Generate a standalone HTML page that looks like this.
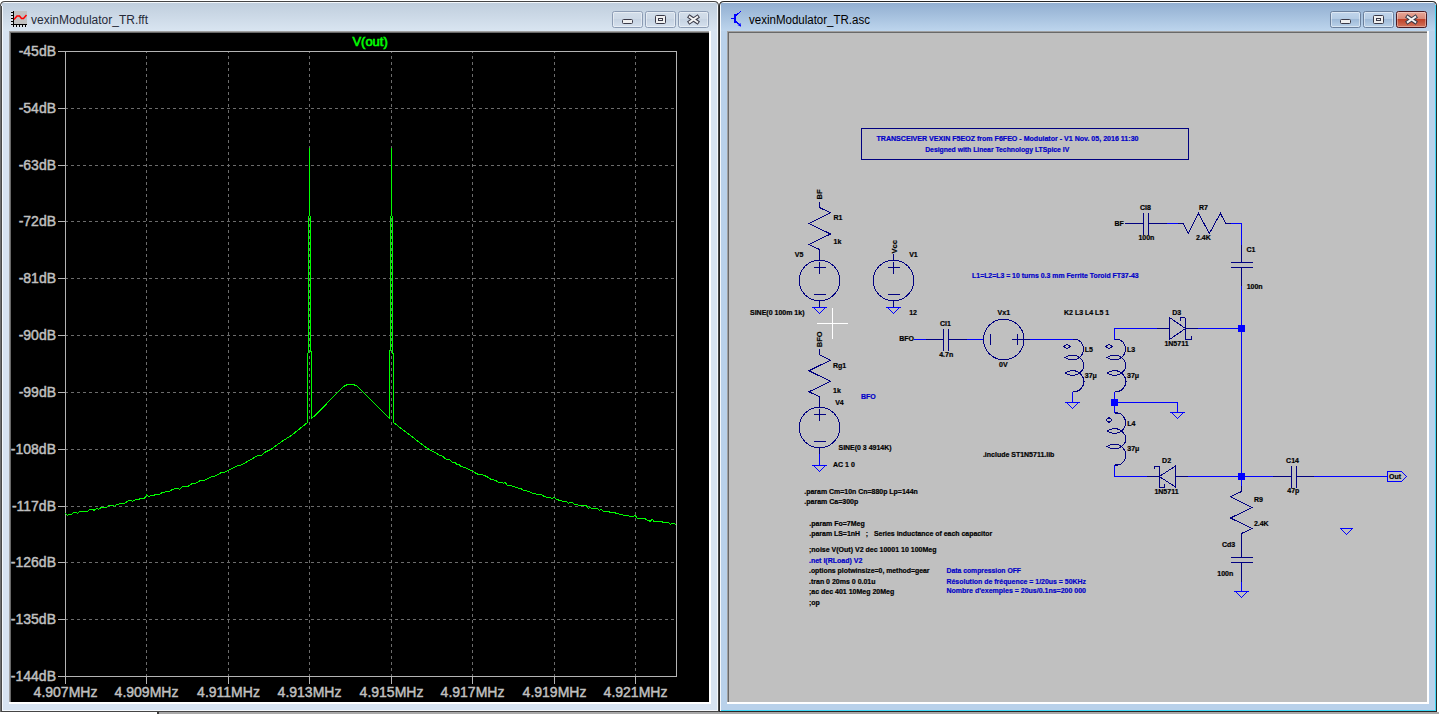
<!DOCTYPE html>
<html><head><meta charset="utf-8"><style>
html,body{margin:0;padding:0;width:1439px;height:714px;overflow:hidden;background:#fff}
</style></head><body>
<svg width="1439" height="714" viewBox="0 0 1439 714" style="position:absolute;left:0;top:0">
<rect width="1439" height="714" fill="#ffffff"/>
<rect x="157" y="712" width="1282" height="2" fill="#a9a9a9"/>
<rect x="157" y="712" width="2" height="2" fill="#3c3c3c"/>
<defs><linearGradient id="tg_i" x1="0" y1="0" x2="0" y2="1"><stop offset="0" stop-color="#c0cedd"/><stop offset="1" stop-color="#d9e5f1"/></linearGradient></defs>
<path d="M0 712 V6 Q0 1 5 1 H714 Q719 1 719 6 V712 Z" fill="#454545"/>
<path d="M1 711 V6 Q1 2 5 2 H714 Q718 2 718 6 V711 Z" fill="#f4f8fc"/>
<rect x="2" y="3" width="715" height="707" fill="#d7e3f1"/>
<rect x="2" y="3" width="715" height="28" fill="url(#tg_i)"/>
<g shape-rendering="crispEdges"><rect x="11" y="11" width="16" height="16" fill="#e4e4e4" opacity="0.6"/><rect x="14" y="11" width="13" height="13" fill="#c0c0c0"/><rect x="13" y="11" width="1" height="14" fill="#000"/><rect x="11" y="24" width="16" height="1" fill="#000"/><rect x="11" y="12" width="2" height="1" fill="#000"/><rect x="11" y="15" width="2" height="1" fill="#000"/><rect x="11" y="18" width="2" height="1" fill="#000"/><rect x="11" y="21" width="2" height="1" fill="#000"/><rect x="13" y="25" width="1" height="2" fill="#000"/><rect x="16" y="25" width="1" height="2" fill="#000"/><rect x="19" y="25" width="1" height="2" fill="#000"/><rect x="22" y="25" width="1" height="2" fill="#000"/><rect x="25" y="25" width="1" height="2" fill="#000"/></g><path d="M14 19.5 L17 16 L19.5 16 L21.5 18.5 L23.5 18.5 L26.5 15" fill="none" stroke="#f00" stroke-width="1.5"/>
<text x="31" y="24" font-family='"Liberation Sans", sans-serif' font-size="12" fill="#252a38" textLength="117" lengthAdjust="spacingAndGlyphs">vexinModulator_TR.fft</text>
<defs><linearGradient id="bg0" x1="0" y1="0" x2="0" y2="1"><stop offset="0" stop-color="#d3deea"/><stop offset="0.5" stop-color="#cdd9e6"/><stop offset="0.5" stop-color="#c6d3e2"/><stop offset="1" stop-color="#d6e1ee"/></linearGradient></defs>
<rect x="612.5" y="11.5" width="30" height="16" rx="2" fill="url(#bg0)" stroke="#8c9cb4"/>
<rect x="613.5" y="12.5" width="28" height="14" rx="1" fill="none" stroke="#ffffff" stroke-opacity="0.45"/>
<rect x="622.5" y="19.5" width="10" height="4" rx="1" fill="#f0f0f0" stroke="#3a3a48"/>
<rect x="645.5" y="11.5" width="30" height="16" rx="2" fill="url(#bg0)" stroke="#8c9cb4"/>
<rect x="646.5" y="12.5" width="28" height="14" rx="1" fill="none" stroke="#ffffff" stroke-opacity="0.45"/>
<rect x="655.5" y="15.5" width="10" height="8" rx="1" fill="#f0f0f0" stroke="#3a3a48"/>
<rect x="658.5" y="18.5" width="4" height="2" fill="none" stroke="#3a3a48"/>
<rect x="678.5" y="11.5" width="30" height="16" rx="2" fill="url(#bg0)" stroke="#8c9cb4"/>
<rect x="679.5" y="12.5" width="28" height="14" rx="1" fill="none" stroke="#ffffff" stroke-opacity="0.45"/>
<path d="M689.8 17 L697.2 22 M697.2 17 L689.8 22" stroke="#3a3a48" stroke-width="4" stroke-linecap="square"/>
<path d="M689.8 17 L697.2 22 M697.2 17 L689.8 22" stroke="#f4f4f4" stroke-width="2" stroke-linecap="square"/>
<rect x="0" y="6" width="1" height="706" fill="#6e6e6e"/><rect x="1" y="6" width="1" height="705" fill="#474747"/><rect x="2" y="6" width="1" height="704" fill="#f4f8fc"/>
<g shape-rendering="crispEdges">
<rect x="9" y="31" width="702" height="673" fill="#ffffff"/>
<rect x="9" y="31" width="700" height="1" fill="#a0a0a0"/><rect x="9" y="31" width="1" height="671" fill="#a0a0a0"/>
<rect x="10" y="32" width="699" height="1" fill="#696969"/><rect x="10" y="32" width="1" height="670" fill="#696969"/>
<rect x="11" y="33" width="698" height="669" fill="#000"/>
</g>
<defs><linearGradient id="tg_a" x1="0" y1="0" x2="0" y2="1"><stop offset="0" stop-color="#92afd1"/><stop offset="1" stop-color="#bdd5ed"/></linearGradient></defs>
<path d="M719 712 V6 Q719 1 724 1 H1432 Q1437 1 1437 6 V712 Z" fill="#262626"/>
<path d="M720 711 V6 Q720 2 724 2 H1432 Q1436 2 1436 6 V711 Z" fill="#f4f8fc"/>
<rect x="721" y="3" width="714" height="707" fill="#b9d1ea"/>
<rect x="1435" y="5" width="1" height="706" fill="#41d6f4"/>
<rect x="721" y="710" width="715" height="1" fill="#41d6f4"/>
<rect x="721" y="3" width="714" height="28" fill="url(#tg_a)"/>
<g fill="#0000ff" shape-rendering="crispEdges"><rect x="731" y="18" width="3" height="1"/><rect x="734" y="14" width="2" height="9"/></g><path d="M735.5 16 L741 11 M735.5 21 L741.5 26.5" stroke="#00f" stroke-width="1" fill="none" shape-rendering="crispEdges"/><path d="M737.5 25 L740.5 23 L741 26.8 Z" fill="#00f"/>
<text x="749" y="24" font-family='"Liberation Sans", sans-serif' font-size="12" fill="#000" textLength="121" lengthAdjust="spacingAndGlyphs">vexinModulator_TR.asc</text>
<defs><linearGradient id="bg1" x1="0" y1="0" x2="0" y2="1"><stop offset="0" stop-color="#c2d6ec"/><stop offset="0.5" stop-color="#b4cbe4"/><stop offset="0.5" stop-color="#9fbad8"/><stop offset="1" stop-color="#bcd3ea"/></linearGradient></defs>
<rect x="1330.5" y="11.5" width="30" height="16" rx="2" fill="url(#bg1)" stroke="#6a7f9c"/>
<rect x="1331.5" y="12.5" width="28" height="14" rx="1" fill="none" stroke="#ffffff" stroke-opacity="0.45"/>
<rect x="1340.5" y="19.5" width="10" height="4" rx="1" fill="#f0f0f0" stroke="#3a3a48"/>
<rect x="1363.5" y="11.5" width="30" height="16" rx="2" fill="url(#bg1)" stroke="#6a7f9c"/>
<rect x="1364.5" y="12.5" width="28" height="14" rx="1" fill="none" stroke="#ffffff" stroke-opacity="0.45"/>
<rect x="1373.5" y="15.5" width="10" height="8" rx="1" fill="#f0f0f0" stroke="#3a3a48"/>
<rect x="1376.5" y="18.5" width="4" height="2" fill="none" stroke="#3a3a48"/>
<defs><linearGradient id="cb" x1="0" y1="0" x2="0" y2="1"><stop offset="0" stop-color="#e9a99a"/><stop offset="0.45" stop-color="#d98a78"/><stop offset="0.5" stop-color="#c0432a"/><stop offset="1" stop-color="#d2775f"/></linearGradient></defs>
<rect x="1396.5" y="11.5" width="30" height="16" rx="2" fill="url(#cb)" stroke="#4a1a22"/>
<rect x="1397.5" y="12.5" width="28" height="14" rx="1" fill="none" stroke="#ffffff" stroke-opacity="0.35"/>
<path d="M1407.8 17 L1415.2 22 M1415.2 17 L1407.8 22" stroke="#3a3a48" stroke-width="4" stroke-linecap="square"/>
<path d="M1407.8 17 L1415.2 22 M1415.2 17 L1407.8 22" stroke="#f4f4f4" stroke-width="2" stroke-linecap="square"/>
<g shape-rendering="crispEdges">
<rect x="727" y="31" width="702" height="673" fill="#ffffff"/>
<rect x="727" y="31" width="700" height="1" fill="#a0a0a0"/><rect x="727" y="31" width="1" height="671" fill="#a0a0a0"/>
<rect x="728" y="32" width="699" height="1" fill="#696969"/><rect x="728" y="32" width="1" height="670" fill="#696969"/>
<rect x="729" y="33" width="698" height="669" fill="#c0c0c0"/>
</g>
<g shape-rendering="crispEdges">
<line x1="65" y1="108.5" x2="676" y2="108.5" stroke="#6c6c6c" stroke-dasharray="3 3"/>
<line x1="65" y1="165.5" x2="676" y2="165.5" stroke="#6c6c6c" stroke-dasharray="3 3"/>
<line x1="65" y1="221.5" x2="676" y2="221.5" stroke="#6c6c6c" stroke-dasharray="3 3"/>
<line x1="65" y1="278.5" x2="676" y2="278.5" stroke="#6c6c6c" stroke-dasharray="3 3"/>
<line x1="65" y1="335.5" x2="676" y2="335.5" stroke="#6c6c6c" stroke-dasharray="3 3"/>
<line x1="65" y1="392.5" x2="676" y2="392.5" stroke="#6c6c6c" stroke-dasharray="3 3"/>
<line x1="65" y1="449.5" x2="676" y2="449.5" stroke="#6c6c6c" stroke-dasharray="3 3"/>
<line x1="65" y1="506.5" x2="676" y2="506.5" stroke="#6c6c6c" stroke-dasharray="3 3"/>
<line x1="65" y1="562.5" x2="676" y2="562.5" stroke="#6c6c6c" stroke-dasharray="3 3"/>
<line x1="65" y1="619.5" x2="676" y2="619.5" stroke="#6c6c6c" stroke-dasharray="3 3"/>
<line x1="146.5" y1="52" x2="146.5" y2="676" stroke="#6c6c6c" stroke-dasharray="3 3" stroke-dashoffset="2"/>
<line x1="228.5" y1="52" x2="228.5" y2="676" stroke="#6c6c6c" stroke-dasharray="3 3" stroke-dashoffset="2"/>
<line x1="309.5" y1="52" x2="309.5" y2="676" stroke="#6c6c6c" stroke-dasharray="3 3" stroke-dashoffset="2"/>
<line x1="391.5" y1="52" x2="391.5" y2="676" stroke="#6c6c6c" stroke-dasharray="3 3" stroke-dashoffset="2"/>
<line x1="472.5" y1="52" x2="472.5" y2="676" stroke="#6c6c6c" stroke-dasharray="3 3" stroke-dashoffset="2"/>
<line x1="554.5" y1="52" x2="554.5" y2="676" stroke="#6c6c6c" stroke-dasharray="3 3" stroke-dashoffset="2"/>
<line x1="635.5" y1="52" x2="635.5" y2="676" stroke="#6c6c6c" stroke-dasharray="3 3" stroke-dashoffset="2"/>
<rect x="65.5" y="51.5" width="611" height="625" fill="none" stroke="#b4b4b4"/>
<line x1="58" y1="51.5" x2="65" y2="51.5" stroke="#b4b4b4"/>
<line x1="58" y1="108.5" x2="65" y2="108.5" stroke="#b4b4b4"/>
<line x1="58" y1="165.5" x2="65" y2="165.5" stroke="#b4b4b4"/>
<line x1="58" y1="221.5" x2="65" y2="221.5" stroke="#b4b4b4"/>
<line x1="58" y1="278.5" x2="65" y2="278.5" stroke="#b4b4b4"/>
<line x1="58" y1="335.5" x2="65" y2="335.5" stroke="#b4b4b4"/>
<line x1="58" y1="392.5" x2="65" y2="392.5" stroke="#b4b4b4"/>
<line x1="58" y1="449.5" x2="65" y2="449.5" stroke="#b4b4b4"/>
<line x1="58" y1="506.5" x2="65" y2="506.5" stroke="#b4b4b4"/>
<line x1="58" y1="562.5" x2="65" y2="562.5" stroke="#b4b4b4"/>
<line x1="58" y1="619.5" x2="65" y2="619.5" stroke="#b4b4b4"/>
<line x1="58" y1="676.5" x2="65" y2="676.5" stroke="#b4b4b4"/>
<line x1="65.5" y1="676" x2="65.5" y2="684" stroke="#b4b4b4"/>
<line x1="146.5" y1="676" x2="146.5" y2="684" stroke="#b4b4b4"/>
<line x1="228.5" y1="676" x2="228.5" y2="684" stroke="#b4b4b4"/>
<line x1="309.5" y1="676" x2="309.5" y2="684" stroke="#b4b4b4"/>
<line x1="391.5" y1="676" x2="391.5" y2="684" stroke="#b4b4b4"/>
<line x1="472.5" y1="676" x2="472.5" y2="684" stroke="#b4b4b4"/>
<line x1="554.5" y1="676" x2="554.5" y2="684" stroke="#b4b4b4"/>
<line x1="635.5" y1="676" x2="635.5" y2="684" stroke="#b4b4b4"/>
</g>
<text x="56" y="56" text-anchor="end" font-family='"Liberation Sans", sans-serif' font-size="14" fill="#c0c0c0" stroke="#c0c0c0" stroke-width="0.45">-45dB</text>
<text x="56" y="113" text-anchor="end" font-family='"Liberation Sans", sans-serif' font-size="14" fill="#c0c0c0" stroke="#c0c0c0" stroke-width="0.45">-54dB</text>
<text x="56" y="170" text-anchor="end" font-family='"Liberation Sans", sans-serif' font-size="14" fill="#c0c0c0" stroke="#c0c0c0" stroke-width="0.45">-63dB</text>
<text x="56" y="226" text-anchor="end" font-family='"Liberation Sans", sans-serif' font-size="14" fill="#c0c0c0" stroke="#c0c0c0" stroke-width="0.45">-72dB</text>
<text x="56" y="283" text-anchor="end" font-family='"Liberation Sans", sans-serif' font-size="14" fill="#c0c0c0" stroke="#c0c0c0" stroke-width="0.45">-81dB</text>
<text x="56" y="340" text-anchor="end" font-family='"Liberation Sans", sans-serif' font-size="14" fill="#c0c0c0" stroke="#c0c0c0" stroke-width="0.45">-90dB</text>
<text x="56" y="397" text-anchor="end" font-family='"Liberation Sans", sans-serif' font-size="14" fill="#c0c0c0" stroke="#c0c0c0" stroke-width="0.45">-99dB</text>
<text x="56" y="454" text-anchor="end" font-family='"Liberation Sans", sans-serif' font-size="14" fill="#c0c0c0" stroke="#c0c0c0" stroke-width="0.45">-108dB</text>
<text x="56" y="511" text-anchor="end" font-family='"Liberation Sans", sans-serif' font-size="14" fill="#c0c0c0" stroke="#c0c0c0" stroke-width="0.45">-117dB</text>
<text x="56" y="567" text-anchor="end" font-family='"Liberation Sans", sans-serif' font-size="14" fill="#c0c0c0" stroke="#c0c0c0" stroke-width="0.45">-126dB</text>
<text x="56" y="624" text-anchor="end" font-family='"Liberation Sans", sans-serif' font-size="14" fill="#c0c0c0" stroke="#c0c0c0" stroke-width="0.45">-135dB</text>
<text x="56" y="681" text-anchor="end" font-family='"Liberation Sans", sans-serif' font-size="14" fill="#c0c0c0" stroke="#c0c0c0" stroke-width="0.45">-144dB</text>
<text x="65.5" y="697" text-anchor="middle" font-family='"Liberation Sans", sans-serif' font-size="14" fill="#c0c0c0" stroke="#c0c0c0" stroke-width="0.45">4.907MHz</text>
<text x="146.5" y="697" text-anchor="middle" font-family='"Liberation Sans", sans-serif' font-size="14" fill="#c0c0c0" stroke="#c0c0c0" stroke-width="0.45">4.909MHz</text>
<text x="228.5" y="697" text-anchor="middle" font-family='"Liberation Sans", sans-serif' font-size="14" fill="#c0c0c0" stroke="#c0c0c0" stroke-width="0.45">4.911MHz</text>
<text x="309.5" y="697" text-anchor="middle" font-family='"Liberation Sans", sans-serif' font-size="14" fill="#c0c0c0" stroke="#c0c0c0" stroke-width="0.45">4.913MHz</text>
<text x="391.5" y="697" text-anchor="middle" font-family='"Liberation Sans", sans-serif' font-size="14" fill="#c0c0c0" stroke="#c0c0c0" stroke-width="0.45">4.915MHz</text>
<text x="472.5" y="697" text-anchor="middle" font-family='"Liberation Sans", sans-serif' font-size="14" fill="#c0c0c0" stroke="#c0c0c0" stroke-width="0.45">4.917MHz</text>
<text x="554.5" y="697" text-anchor="middle" font-family='"Liberation Sans", sans-serif' font-size="14" fill="#c0c0c0" stroke="#c0c0c0" stroke-width="0.45">4.919MHz</text>
<text x="635.5" y="697" text-anchor="middle" font-family='"Liberation Sans", sans-serif' font-size="14" fill="#c0c0c0" stroke="#c0c0c0" stroke-width="0.45">4.921MHz</text>
<text x="370.1" y="45.6" text-anchor="middle" font-family='"Liberation Sans", sans-serif' font-size="13" fill="#00ff00" stroke="#00ff00" stroke-width="0.6">V(out)</text>
<path d="M65.3 513.3 L67.4 515.4 L68.7 514.2 L71.6 514.2 L74.5 512.1 L76.6 512.1 L77.4 513.3 L80.3 511.3 L87.4 511.3 L90.3 509.2 L92.4 509.2 L94.1 510.4 L97.0 508.3 L98.3 509.6 L102.0 507.1 L106.6 507.1 L109.9 505.0 L113.3 505.0 L114.5 506.7 L117.0 504.2 L124.5 503.3 L129.1 500.4 L131.2 500.4 L132.4 501.7 L135.3 499.6 L144.5 498.3 L146.6 494.8 L148.7 496.5 L152.0 495.4 L159.5 494.2 L162.8 492.3 L169.5 491.3 L172.8 489.3 L177.8 488.3 L179.5 489.6 L182.5 486.5 L187.6 486.5 L192.6 483.4 L195.5 483.4 L200.6 480.4 L204.4 480.4 L211.9 476.4 L214.5 476.4 L221.6 472.4 L224.5 472.4 L238.0 465.5 L240.5 465.5 L258.2 455.4 L261.5 455.4 L264.9 452.3 L270.8 449.5 L275.0 446.4 L280.8 442.2 L286.7 438.4 L291.8 435.2 L297.6 430.4 L307.5 422.5 L307.5 353.5 L308.5 352.5 L308.5 216.5 L309.5 215.5 L309.5 148.0 L309.5 215.5 L310.5 216.5 L310.5 351.0 L311.5 352.0 L311.5 418.5 L315.1 415.4 L327.5 402.8 L343.7 386.4 L347.5 384.5 L353.4 384.5 L357.6 386.4 L369.7 398.6 L372.3 401.5 L389.5 418.5 L389.5 351.0 L390.5 350.0 L390.5 216.5 L391.5 215.5 L391.5 148.0 L391.5 215.5 L392.5 216.5 L392.5 353.0 L393.5 354.0 L393.5 422.5 L400.0 427.6 L410.2 435.3 L427.3 448.4 L440.0 455.4 L442.5 456.3 L446.3 459.3 L449.6 459.3 L452.5 462.3 L454.6 462.3 L456.7 464.3 L458.8 464.3 L460.9 466.5 L465.0 467.5 L469.2 469.8 L472.1 470.4 L475.9 473.4 L478.4 474.4 L481.7 474.4 L486.7 476.5 L490.9 479.2 L495.0 480.2 L499.2 482.5 L502.6 482.5 L503.4 483.5 L505.1 482.1 L507.1 485.4 L510.9 485.4 L516.7 487.9 L520.9 488.4 L523.4 490.4 L528.4 491.3 L532.6 493.4 L536.7 494.2 L541.8 494.6 L544.2 496.5 L548.4 497.5 L552.6 498.4 L554.3 497.1 L556.3 499.4 L560.0 500.4 L562.5 501.3 L566.7 501.3 L568.3 503.3 L570.0 502.3 L571.7 502.3 L574.2 504.0 L577.5 504.6 L578.3 505.4 L583.8 505.4 L585.9 505.2 L588.4 508.3 L589.6 507.3 L592.1 508.3 L596.7 508.3 L599.6 510.4 L601.3 509.3 L603.4 511.5 L608.8 511.5 L610.0 512.3 L614.6 512.3 L615.9 513.3 L618.8 513.8 L619.6 514.6 L622.6 514.6 L623.8 515.4 L628.4 515.4 L630.1 516.5 L633.8 516.5 L635.1 515.0 L637.1 518.4 L644.7 518.4 L645.9 519.4 L650.1 521.3 L652.2 519.4 L654.2 521.5 L661.7 521.5 L663.0 522.5 L665.9 522.9 L668.0 522.1 L670.5 524.3 L672.2 523.3 L676.0 524.3" fill="none" stroke="#00ff00" stroke-width="1" stroke-linejoin="miter" shape-rendering="crispEdges"/>
<g shape-rendering="crispEdges">
<rect x="861.5" y="128.5" width="327" height="31" fill="none" stroke="#000080" stroke-width="1.3"/>
<text x="1007.5" y="141.2" font-family='"Liberation Sans", sans-serif' font-size="7" font-weight="bold" fill="#0000c8" stroke="#0000c8" stroke-width="0.2" text-anchor="middle"  textLength="262" lengthAdjust="spacingAndGlyphs">TRANSCEIVER VEXIN F5EOZ from F6FEO - Modulator - V1 Nov. 05, 2016 11:30</text>
<text x="997.2" y="152" font-family='"Liberation Sans", sans-serif' font-size="7" font-weight="bold" fill="#0000c8" stroke="#0000c8" stroke-width="0.2" text-anchor="middle"  textLength="144" lengthAdjust="spacingAndGlyphs">Designed with Linear Technology LTSpice IV</text>
<text transform="translate(822 199.5) rotate(-90)" font-family='"Liberation Sans", sans-serif' font-size="7.5" font-weight="bold" fill="#000" stroke="#000" stroke-width="0.2">BF</text>
<path d="M819.5 202.0 L819.5 207.5 L830.5 212.8 L809.0 223.5 L830.5 234.0 L809.0 244.5 L819.5 249.5 L819.5 254.8" fill="none" stroke="#000080" stroke-width="1.0"/>
<path d="M819.5 254.8 L819.5 260" fill="none" stroke="#000080" stroke-width="1.0"/>
<circle cx="819.5" cy="280.5" r="20.3" fill="none" stroke="#000080" stroke-width="1"/>
<path d="M813.5 267.5 H825.5 M819.5 261.5 V273.5 M813.5 294.5 H825.5" stroke="#000080" stroke-width="1" fill="none"/>
<path d="M819.5 300.8 L819.5 307.5" fill="none" stroke="#000080" stroke-width="1.0"/>
<path d="M813.2 307.5 H825.8 L819.5 313.5 Z" fill="none" stroke="#0000ff" stroke-width="1"/>
<text x="833.5" y="220" font-family='"Liberation Sans", sans-serif' font-size="7" font-weight="bold" fill="#000" stroke="#000" stroke-width="0.2" text-anchor="start" >R1</text>
<text x="833.5" y="244.2" font-family='"Liberation Sans", sans-serif' font-size="7" font-weight="bold" fill="#000" stroke="#000" stroke-width="0.2" text-anchor="start" >1k</text>
<text x="794.8" y="257" font-family='"Liberation Sans", sans-serif' font-size="7" font-weight="bold" fill="#000" stroke="#000" stroke-width="0.2" text-anchor="start" >V5</text>
<text x="750" y="315" font-family='"Liberation Sans", sans-serif' font-size="7" font-weight="bold" fill="#000" stroke="#000" stroke-width="0.2" text-anchor="start"  textLength="54.5" lengthAdjust="spacingAndGlyphs">SINE(0 100m 1k)</text>
<text transform="translate(896.5 253.5) rotate(-90)" font-family='"Liberation Sans", sans-serif' font-size="7.5" font-weight="bold" fill="#000" stroke="#000" stroke-width="0.2">Vcc</text>
<path d="M893.5 253.5 L893.5 260" fill="none" stroke="#000080" stroke-width="1.0"/>
<circle cx="893.5" cy="280.5" r="20.3" fill="none" stroke="#000080" stroke-width="1"/>
<path d="M887.5 267.5 H899.5 M893.5 261.5 V273.5 M887.5 294.5 H899.5" stroke="#000080" stroke-width="1" fill="none"/>
<path d="M893.5 300.8 L893.5 307.5" fill="none" stroke="#000080" stroke-width="1.0"/>
<path d="M887.2 307.5 H899.8 L893.5 313.5 Z" fill="none" stroke="#0000ff" stroke-width="1"/>
<text x="909.2" y="257" font-family='"Liberation Sans", sans-serif' font-size="7" font-weight="bold" fill="#000" stroke="#000" stroke-width="0.2" text-anchor="start" >V1</text>
<text x="909.2" y="315" font-family='"Liberation Sans", sans-serif' font-size="7" font-weight="bold" fill="#000" stroke="#000" stroke-width="0.2" text-anchor="start" >12</text>
<text transform="translate(822 347.2) rotate(-90)" font-family='"Liberation Sans", sans-serif' font-size="7.5" font-weight="bold" fill="#000" stroke="#000" stroke-width="0.2">BFO</text>
<path d="M819.5 349.3 L819.5 354.8 L830.5 360.1 L809.0 370.8 L830.5 381.3 L809.0 391.8 L819.5 396.8 L819.5 402.1" fill="none" stroke="#000080" stroke-width="1.0"/>
<path d="M819.5 402.1 L819.5 407.2" fill="none" stroke="#000080" stroke-width="1.0"/>
<circle cx="819.5" cy="427.5" r="20.3" fill="none" stroke="#000080" stroke-width="1"/>
<path d="M813.5 414.5 H825.5 M819.5 408.5 V420.5 M813.5 441.5 H825.5" stroke="#000080" stroke-width="1" fill="none"/>
<path d="M819.5 447.8 L819.5 454" fill="none" stroke="#000080" stroke-width="1.0"/>
<path d="M819.5 454 L819.5 465.5" fill="none" stroke="#0000ff" stroke-width="1.0"/>
<path d="M813.2 465.5 H825.8 L819.5 471.5 Z" fill="none" stroke="#0000ff" stroke-width="1"/>
<text x="833" y="367.5" font-family='"Liberation Sans", sans-serif' font-size="7" font-weight="bold" fill="#000" stroke="#000" stroke-width="0.2" text-anchor="start" >Rg1</text>
<text x="833" y="392.5" font-family='"Liberation Sans", sans-serif' font-size="7" font-weight="bold" fill="#000" stroke="#000" stroke-width="0.2" text-anchor="start" >1k</text>
<text x="835.2" y="405" font-family='"Liberation Sans", sans-serif' font-size="7" font-weight="bold" fill="#000" stroke="#000" stroke-width="0.2" text-anchor="start" >V4</text>
<text x="861" y="399" font-family='"Liberation Sans", sans-serif' font-size="7" font-weight="bold" fill="#0000c8" stroke="#0000c8" stroke-width="0.2" text-anchor="start" >BFO</text>
<text x="838.5" y="450" font-family='"Liberation Sans", sans-serif' font-size="7" font-weight="bold" fill="#000" stroke="#000" stroke-width="0.2" text-anchor="start"  textLength="53" lengthAdjust="spacingAndGlyphs">SINE(0 3 4914K)</text>
<text x="833" y="467" font-family='"Liberation Sans", sans-serif' font-size="7" font-weight="bold" fill="#000" stroke="#000" stroke-width="0.2" text-anchor="start" >AC 1 0</text>
<text x="899.2" y="340.8" font-family='"Liberation Sans", sans-serif' font-size="7" font-weight="bold" fill="#000" stroke="#000" stroke-width="0.2" text-anchor="start" >BFO</text>
<path d="M913.5 339.5 L926 339.5" fill="none" stroke="#0000ff" stroke-width="1.0"/>
<path d="M926 339.5 L943.5 339.5" fill="none" stroke="#000080" stroke-width="1.0"/>
<path d="M943.5 328.5 V350.5 M948.5 328.5 V350.5" stroke="#000080" stroke-width="1" fill="none"/>
<path d="M948.5 339.5 L966.7 339.5" fill="none" stroke="#000080" stroke-width="1.0"/>
<path d="M966.7 339.5 L983.5 339.5" fill="none" stroke="#0000ff" stroke-width="1.0"/>
<circle cx="1003.8" cy="339.5" r="20.3" fill="none" stroke="#000080" stroke-width="1"/>
<path d="M990.5 333.5 V345 M1011.8 339.5 H1023.6 M1017.7 333.8 V345.2" stroke="#000080" stroke-width="1" fill="none"/>
<path d="M1024.1 339.5 L1029.5 339.5" fill="none" stroke="#000080" stroke-width="1.0"/>
<path d="M1029.5 339.5 L1072.5 339.5" fill="none" stroke="#0000ff" stroke-width="1.0"/>
<path d="M1072.5 339.5 H1075.5 C1079.5 339.5 1083.5 343.5 1083.5 349.0 C1083.5 352.5 1082.0 355.5 1079.5 357.5 C1075.5 354.3 1070.5 354.3 1065.0 357.5 C1070.5 360.7 1075.5 360.7 1079.5 357.5 C1082.3 360.0 1084.0 362.5 1084.0 365.3 C1084.0 368.1 1082.3 370.7 1079.5 373.0 C1075.5 369.8 1070.5 369.8 1065.0 373.0 C1070.5 376.2 1075.5 376.2 1079.5 373.0 C1082.3 375.5 1084.0 378.0 1084.0 381.5 C1084.0 385.5 1080.5 391.5 1075.5 391.5 H1072.5 " fill="none" stroke="#000080" stroke-width="1.05"/>
<path d="M1064.0 346.5 L1067.0 344.0 L1070.0 346.5 L1067.0 349.0 Z" fill="none" stroke="#000080" stroke-width="1"/>
<path d="M1072.5 391.5 L1072.5 402.5" fill="none" stroke="#0000ff" stroke-width="1.0"/>
<path d="M1066.2 402.5 H1078.8 L1072.5 408.5 Z" fill="none" stroke="#0000ff" stroke-width="1"/>
<text x="940" y="326" font-family='"Liberation Sans", sans-serif' font-size="7" font-weight="bold" fill="#000" stroke="#000" stroke-width="0.2" text-anchor="start" >Cl1</text>
<text x="939.2" y="356.5" font-family='"Liberation Sans", sans-serif' font-size="7" font-weight="bold" fill="#000" stroke="#000" stroke-width="0.2" text-anchor="start" >4.7n</text>
<text x="997.6" y="315.4" font-family='"Liberation Sans", sans-serif' font-size="7" font-weight="bold" fill="#000" stroke="#000" stroke-width="0.2" text-anchor="start" >Vx1</text>
<text x="999" y="367.2" font-family='"Liberation Sans", sans-serif' font-size="7" font-weight="bold" fill="#000" stroke="#000" stroke-width="0.2" text-anchor="start" >0V</text>
<text x="1064" y="315.4" font-family='"Liberation Sans", sans-serif' font-size="7" font-weight="bold" fill="#000" stroke="#000" stroke-width="0.2" text-anchor="start" >K2 L3 L4 L5 1</text>
<text x="1084.8" y="352.2" font-family='"Liberation Sans", sans-serif' font-size="7" font-weight="bold" fill="#000" stroke="#000" stroke-width="0.2" text-anchor="start" >L5</text>
<text x="1084.8" y="378.2" font-family='"Liberation Sans", sans-serif' font-size="7" font-weight="bold" fill="#000" stroke="#000" stroke-width="0.2" text-anchor="start" >37μ</text>
<text x="972.1" y="277.8" font-family='"Liberation Sans", sans-serif' font-size="7" font-weight="bold" fill="#0000c8" stroke="#0000c8" stroke-width="0.2" text-anchor="start"  textLength="166.5" lengthAdjust="spacingAndGlyphs">L1=L2=L3 = 10 turns 0.3 mm Ferrite Toroid FT37-43</text>
<text x="982.9" y="457.2" font-family='"Liberation Sans", sans-serif' font-size="7" font-weight="bold" fill="#000" stroke="#000" stroke-width="0.2" text-anchor="start"  textLength="71.5" lengthAdjust="spacingAndGlyphs">.include ST1N5711.lib</text>
<text x="1114.5" y="225.5" font-family='"Liberation Sans", sans-serif' font-size="7" font-weight="bold" fill="#000" stroke="#000" stroke-width="0.2" text-anchor="start" >BF</text>
<path d="M1125.2 223.5 L1143.5 223.5" fill="none" stroke="#000080" stroke-width="1.0"/>
<path d="M1143.5 212.5 V234.5 M1148.5 212.5 V234.5" stroke="#000080" stroke-width="1" fill="none"/>
<path d="M1148.5 223.5 L1167.2 223.5" fill="none" stroke="#000080" stroke-width="1.0"/>
<path d="M1167.2 223.5 L1178.2 223.5" fill="none" stroke="#0000ff" stroke-width="1.0"/>
<path d="M1178.2 223.5 L1183.4 223.5 L1188.4 233.5 L1198.4 213.3 L1209.4 233.5 L1220.4 213.3 L1225.7 223.5 L1230.7 223.5" fill="none" stroke="#000080" stroke-width="1.0"/>
<path d="M1230.7 223.5 L1241.5 223.5 L1241.5 244.8" fill="none" stroke="#0000ff" stroke-width="1.0"/>
<path d="M1241.5 244.8 L1241.5 262.5" fill="none" stroke="#000080" stroke-width="1.0"/>
<path d="M1230.5 262.5 H1252.5 M1230.5 267.5 H1252.5" stroke="#000080" stroke-width="1" fill="none"/>
<path d="M1241.5 267.5 L1241.5 285.7" fill="none" stroke="#000080" stroke-width="1.0"/>
<path d="M1241.5 285.7 L1241.5 476.5" fill="none" stroke="#0000ff" stroke-width="1.0"/>
<text x="1140" y="210" font-family='"Liberation Sans", sans-serif' font-size="7" font-weight="bold" fill="#000" stroke="#000" stroke-width="0.2" text-anchor="start" >Cl8</text>
<text x="1138.4" y="240.2" font-family='"Liberation Sans", sans-serif' font-size="7" font-weight="bold" fill="#000" stroke="#000" stroke-width="0.2" text-anchor="start" >100n</text>
<text x="1199" y="210" font-family='"Liberation Sans", sans-serif' font-size="7" font-weight="bold" fill="#000" stroke="#000" stroke-width="0.2" text-anchor="start" >R7</text>
<text x="1196" y="240.2" font-family='"Liberation Sans", sans-serif' font-size="7" font-weight="bold" fill="#000" stroke="#000" stroke-width="0.2" text-anchor="start" >2.4K</text>
<text x="1246.4" y="252.2" font-family='"Liberation Sans", sans-serif' font-size="7" font-weight="bold" fill="#000" stroke="#000" stroke-width="0.2" text-anchor="start" >C1</text>
<text x="1246.7" y="288.7" font-family='"Liberation Sans", sans-serif' font-size="7" font-weight="bold" fill="#000" stroke="#000" stroke-width="0.2" text-anchor="start" >100n</text>
<path d="M1114.5 339.5 L1114.5 328.5 L1157 328.5" fill="none" stroke="#0000ff" stroke-width="1.0"/>
<path d="M1157 328.5 L1169.6 328.5" fill="none" stroke="#000080" stroke-width="1.0"/>
<path d="M1169.6 317.5 V339.5 L1185.3999999999999 328.5 Z M1185.3999999999999 317.5 V339.5 M1185.3999999999999 317.5 H1180.3999999999999 V321.0 M1185.3999999999999 339.5 H1191.6999999999998 V336.0" fill="none" stroke="#000080" stroke-width="1"/>
<path d="M1185.4 328.5 L1198 328.5" fill="none" stroke="#000080" stroke-width="1.0"/>
<path d="M1198 328.5 L1241.5 328.5" fill="none" stroke="#0000ff" stroke-width="1.0"/>
<rect x="1238.0" y="325.0" width="7" height="7" fill="#0000ff"/>
<text x="1172.3" y="315" font-family='"Liberation Sans", sans-serif' font-size="7" font-weight="bold" fill="#000" stroke="#000" stroke-width="0.2" text-anchor="start" >D3</text>
<text x="1164.4" y="345.8" font-family='"Liberation Sans", sans-serif' font-size="7" font-weight="bold" fill="#000" stroke="#000" stroke-width="0.2" text-anchor="start" >1N5711</text>
<path d="M1114.5 339.5 H1117.5 C1121.5 339.5 1125.5 343.5 1125.5 349.0 C1125.5 352.5 1124.0 355.5 1121.5 357.5 C1117.5 354.3 1112.5 354.3 1107.0 357.5 C1112.5 360.7 1117.5 360.7 1121.5 357.5 C1124.3 360.0 1126.0 362.5 1126.0 365.3 C1126.0 368.1 1124.3 370.7 1121.5 373.0 C1117.5 369.8 1112.5 369.8 1107.0 373.0 C1112.5 376.2 1117.5 376.2 1121.5 373.0 C1124.3 375.5 1126.0 378.0 1126.0 381.5 C1126.0 385.5 1122.5 391.5 1117.5 391.5 H1114.5 " fill="none" stroke="#000080" stroke-width="1.05"/>
<path d="M1106.0 346.5 L1109.0 344.0 L1112.0 346.5 L1109.0 349.0 Z" fill="none" stroke="#000080" stroke-width="1"/>
<path d="M1114.5 391.5 L1114.5 413" fill="none" stroke="#0000ff" stroke-width="1.0"/>
<rect x="1111.0" y="399.0" width="7" height="7" fill="#0000ff"/>
<path d="M1114.5 402.5 L1177.5 402.5 L1177.5 412.5" fill="none" stroke="#0000ff" stroke-width="1.0"/>
<path d="M1171.2 412.5 H1183.8 L1177.5 418.5 Z" fill="none" stroke="#0000ff" stroke-width="1"/>
<path d="M1114.5 413 H1117.5 C1121.5 413 1125.5 417 1125.5 422.5 C1125.5 426 1124.0 429 1121.5 431 C1117.5 427.8 1112.5 427.8 1107.0 431 C1112.5 434.2 1117.5 434.2 1121.5 431 C1124.3 433.5 1126.0 436 1126.0 438.8 C1126.0 441.6 1124.3 444.2 1121.5 446.5 C1117.5 443.3 1112.5 443.3 1107.0 446.5 C1112.5 449.7 1117.5 449.7 1121.5 446.5 C1124.3 449 1126.0 451.5 1126.0 455 C1126.0 459 1122.5 465 1117.5 465 H1114.5 " fill="none" stroke="#000080" stroke-width="1.05"/>
<path d="M1106.0 420 L1109.0 417.5 L1112.0 420 L1109.0 422.5 Z" fill="none" stroke="#000080" stroke-width="1"/>
<path d="M1114.5 465 L1114.5 476.5 L1147 476.5" fill="none" stroke="#0000ff" stroke-width="1.0"/>
<text x="1127" y="352.2" font-family='"Liberation Sans", sans-serif' font-size="7" font-weight="bold" fill="#000" stroke="#000" stroke-width="0.2" text-anchor="start" >L3</text>
<text x="1127" y="378.2" font-family='"Liberation Sans", sans-serif' font-size="7" font-weight="bold" fill="#000" stroke="#000" stroke-width="0.2" text-anchor="start" >37μ</text>
<text x="1127.3" y="425.8" font-family='"Liberation Sans", sans-serif' font-size="7" font-weight="bold" fill="#000" stroke="#000" stroke-width="0.2" text-anchor="start" >L4</text>
<text x="1127.3" y="451.2" font-family='"Liberation Sans", sans-serif' font-size="7" font-weight="bold" fill="#000" stroke="#000" stroke-width="0.2" text-anchor="start" >37μ</text>
<path d="M1147 476.5 L1159.3 476.5" fill="none" stroke="#000080" stroke-width="1.0"/>
<path d="M1175.5 466.0 V487.0 L1159.3 476.5 Z M1159.3 466.0 V487.0 M1159.3 466.0 H1154.3 V469.3 M1159.3 487.0 H1164.3 V483.7" fill="none" stroke="#000080" stroke-width="1"/>
<path d="M1175.5 476.5 L1187.8 476.5" fill="none" stroke="#000080" stroke-width="1.0"/>
<path d="M1187.8 476.5 L1273.3 476.5" fill="none" stroke="#0000ff" stroke-width="1.0"/>
<rect x="1238.0" y="473.0" width="7" height="7" fill="#0000ff"/>
<text x="1162.1" y="462.6" font-family='"Liberation Sans", sans-serif' font-size="7" font-weight="bold" fill="#000" stroke="#000" stroke-width="0.2" text-anchor="start" >D2</text>
<text x="1154.4" y="494.2" font-family='"Liberation Sans", sans-serif' font-size="7" font-weight="bold" fill="#000" stroke="#000" stroke-width="0.2" text-anchor="start" >1N5711</text>
<path d="M1273.3 476.5 L1291.5 476.5" fill="none" stroke="#000080" stroke-width="1.0"/>
<path d="M1291.5 465.5 V487.5 M1296.5 465.5 V487.5" stroke="#000080" stroke-width="1" fill="none"/>
<path d="M1296.5 476.5 L1314 476.5" fill="none" stroke="#000080" stroke-width="1.0"/>
<path d="M1314 476.5 L1387.9 476.5" fill="none" stroke="#0000ff" stroke-width="1.0"/>
<path d="M1387.5 471.5 H1401.5 L1406.5 476.5 L1401.5 481.5 H1387.5 Z" fill="none" stroke="#0000ff" stroke-width="1"/>
<text x="1389" y="478.6" font-family='"Liberation Sans", sans-serif' font-size="7" font-weight="bold" fill="#000" stroke="#000" stroke-width="0.2" text-anchor="start" >Out</text>
<text x="1286.1" y="463" font-family='"Liberation Sans", sans-serif' font-size="7" font-weight="bold" fill="#000" stroke="#000" stroke-width="0.2" text-anchor="start" >C14</text>
<text x="1287.3" y="492.5" font-family='"Liberation Sans", sans-serif' font-size="7" font-weight="bold" fill="#000" stroke="#000" stroke-width="0.2" text-anchor="start" >47p</text>
<path d="M1241.5 476.5 L1241.5 486.2" fill="none" stroke="#0000ff" stroke-width="1.0"/>
<path d="M1241.5 486.0 L1241.5 491.5 L1230.5 496.8 L1252.0 507.5 L1230.5 518.0 L1252.0 528.5 L1241.5 533.5 L1241.5 538.8" fill="none" stroke="#000080" stroke-width="1.0"/>
<path d="M1241.5 538.8 L1241.5 557.5" fill="none" stroke="#000080" stroke-width="1.0"/>
<path d="M1230.5 557.5 H1252.5 M1230.5 562.5 H1252.5" stroke="#000080" stroke-width="1" fill="none"/>
<path d="M1241.5 562.5 L1241.5 581.5" fill="none" stroke="#000080" stroke-width="1.0"/>
<path d="M1241.5 581.5 L1241.5 591.5" fill="none" stroke="#0000ff" stroke-width="1.0"/>
<path d="M1235.2 591.5 H1247.8 L1241.5 597.5 Z" fill="none" stroke="#0000ff" stroke-width="1"/>
<text x="1253.9" y="502" font-family='"Liberation Sans", sans-serif' font-size="7" font-weight="bold" fill="#000" stroke="#000" stroke-width="0.2" text-anchor="start" >R9</text>
<text x="1253.9" y="526" font-family='"Liberation Sans", sans-serif' font-size="7" font-weight="bold" fill="#000" stroke="#000" stroke-width="0.2" text-anchor="start" >2.4K</text>
<text x="1222" y="546.5" font-family='"Liberation Sans", sans-serif' font-size="7" font-weight="bold" fill="#000" stroke="#000" stroke-width="0.2" text-anchor="start" >Cd3</text>
<text x="1217.3" y="576" font-family='"Liberation Sans", sans-serif' font-size="7" font-weight="bold" fill="#000" stroke="#000" stroke-width="0.2" text-anchor="start" >100n</text>
<path d="M1340.5 528.5 H1352.5 L1346.5 534.5 Z" fill="none" stroke="#0000ff" stroke-width="1"/>
<text x="804.3" y="493.8" font-family='"Liberation Sans", sans-serif' font-size="7" font-weight="bold" fill="#000" stroke="#000" stroke-width="0.2" text-anchor="start"  textLength="113.5" lengthAdjust="spacingAndGlyphs">.param Cm=10n Cn=880p Lp=144n</text>
<text x="804.3" y="503.8" font-family='"Liberation Sans", sans-serif' font-size="7" font-weight="bold" fill="#000" stroke="#000" stroke-width="0.2" text-anchor="start" >.param Ca=300p</text>
<text x="809.3" y="525.7" font-family='"Liberation Sans", sans-serif' font-size="7" font-weight="bold" fill="#000" stroke="#000" stroke-width="0.2" text-anchor="start" >.param Fo=7Meg</text>
<text x="809.3" y="536.2" font-family='"Liberation Sans", sans-serif' font-size="7" font-weight="bold" fill="#000" stroke="#000" stroke-width="0.2" text-anchor="start"  textLength="183" lengthAdjust="spacingAndGlyphs">.param LS=1nH   ;   Series inductance of each capacitor</text>
<text x="809" y="551.8" font-family='"Liberation Sans", sans-serif' font-size="7" font-weight="bold" fill="#000" stroke="#000" stroke-width="0.2" text-anchor="start"  textLength="127.5" lengthAdjust="spacingAndGlyphs">;noise V(Out) V2 dec 10001 10 100Meg</text>
<text x="809" y="562.5" font-family='"Liberation Sans", sans-serif' font-size="7" font-weight="bold" fill="#0000c8" stroke="#0000c8" stroke-width="0.2" text-anchor="start" >.net I(RLoad) V2</text>
<text x="809" y="572.7" font-family='"Liberation Sans", sans-serif' font-size="7" font-weight="bold" fill="#000" stroke="#000" stroke-width="0.2" text-anchor="start"  textLength="120.5" lengthAdjust="spacingAndGlyphs">.options plotwinsize=0, method=gear</text>
<text x="809" y="584" font-family='"Liberation Sans", sans-serif' font-size="7" font-weight="bold" fill="#000" stroke="#000" stroke-width="0.2" text-anchor="start" >.tran 0 20ms 0 0.01u</text>
<text x="809" y="593.5" font-family='"Liberation Sans", sans-serif' font-size="7" font-weight="bold" fill="#000" stroke="#000" stroke-width="0.2" text-anchor="start" >;ac dec 401 10Meg 20Meg</text>
<text x="809" y="604.5" font-family='"Liberation Sans", sans-serif' font-size="7" font-weight="bold" fill="#000" stroke="#000" stroke-width="0.2" text-anchor="start" >;op</text>
<text x="946.5" y="572.8" font-family='"Liberation Sans", sans-serif' font-size="7" font-weight="bold" fill="#0000c8" stroke="#0000c8" stroke-width="0.2" text-anchor="start"  textLength="74.5" lengthAdjust="spacingAndGlyphs">Data compression OFF</text>
<text x="946.5" y="583.7" font-family='"Liberation Sans", sans-serif' font-size="7" font-weight="bold" fill="#0000c8" stroke="#0000c8" stroke-width="0.2" text-anchor="start"  textLength="139.5" lengthAdjust="spacingAndGlyphs">Résolution de fréquence = 1/20us = 50KHz</text>
<text x="946.5" y="592.6" font-family='"Liberation Sans", sans-serif' font-size="7" font-weight="bold" fill="#0000c8" stroke="#0000c8" stroke-width="0.2" text-anchor="start"  textLength="139.5" lengthAdjust="spacingAndGlyphs">Nombre d'exemples = 20us/0.1ns=200 000</text>
<path d="M832.5 308 V339 M817 323.5 H848" stroke="#fff" stroke-width="1" fill="none" shape-rendering="crispEdges"/>
</g>
</svg>
</body></html>
